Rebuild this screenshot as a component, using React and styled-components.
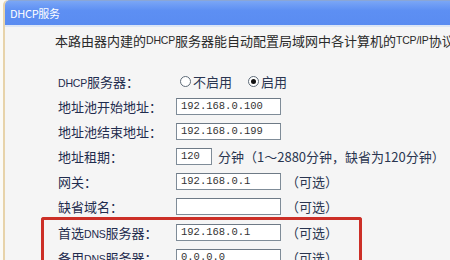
import React from 'react';
import styled, { createGlobalStyle } from 'styled-components';

const GlobalStyle = createGlobalStyle`
  html, body {
    margin: 0;
    padding: 0;
    background: #fbfaf6;
    overflow: hidden;
  }
  body {
    font-family: "Noto Sans CJK SC", "Liberation Sans", sans-serif;
  }
`;

const Window = styled.div`
  width: 450px;
  height: 260px;
  padding-left: 3px;
  box-sizing: border-box;
  overflow: hidden;
`;

const Panel = styled.div`
  height: 100%;
  background: #f5f5f5;
  border-left: 2px solid #e7d3aa;
  border-top-left-radius: 5px;
`;

const TitleBar = styled.div`
  height: 24px;
  display: flex;
  align-items: center;
  padding-left: 5px;
  background: linear-gradient(#7aa6f6, #5d8ff3 40%, #5a8cf1);
  border-top: 1px solid #8aa6d6;
  border-top-left-radius: 5px;
  color: #fff;
  font-size: 11px;
  letter-spacing: -0.3px;
`;

const TitleLine = styled.div`
  height: 2px;
  background: #dce6f5;
`;

const Intro = styled.p`
  margin: 0;
  height: 26px;
  padding-left: 50px;
  display: flex;
  align-items: center;
  font-size: 13px;
  color: #2a2a2a;
  white-space: nowrap;
`;

const Latin = styled.span`
  font-family: "Liberation Sans", sans-serif;
  font-size: 10.5px;
  letter-spacing: -0.2px;
`;

const Form = styled.div`
  margin-top: 16px;
`;

const Row = styled.div`
  display: grid;
  grid-template-columns: 118px auto;
  align-items: center;
  height: 25px;
  padding-left: ${p => p.indent}px;
`;

const Label = styled.span`
  font-size: 13px;
  color: #1f2c4e;
  white-space: nowrap;
`;

const Field = styled.div`
  display: flex;
  align-items: center;
  font-size: 13px;
  color: #2a3550;
  white-space: nowrap;
`;

const Input = styled.div`
  width: ${p => p.w}px;
  height: 17px;
  box-sizing: border-box;
  border: 1px solid #7f8c98;
  border-top-color: #6e7a86;
  background: #fff;
  padding-left: 4px;
  font-family: "Liberation Mono", monospace;
  font-size: 10.5px;
  line-height: 15px;
  color: #333;
`;

const Note = styled.span`
  margin-left: ${p => p.gap}px;
`;

const Radio = styled.span`
  width: 11px;
  height: 11px;
  box-sizing: border-box;
  border-radius: 50%;
  border: 1px solid #5e6b78;
  background: #fff;
  display: inline-flex;
  align-items: center;
  justify-content: center;
  margin: 0 2px 0 4px;

  &::after {
    content: '';
    width: 5px;
    height: 5px;
    border-radius: 50%;
    background: ${p => (p.checked ? '#111' : 'transparent')};
  }
`;

const RadioText = styled.span`
  margin-right: 12px;
`;

const DnsBox = styled.div`
  margin: -2px 0 0 36px;
  width: 321px;
  height: 60px;
  box-sizing: border-box;
  border: 3px solid #cc2f27;
  border-bottom: none;
  border-top-right-radius: 3px;
  border-top-left-radius: 3px;
`;

const TextRow = ({ label, value, width = 105, note, indent = 53 }) => (
  <Row indent={indent}>
    <Label>{label}</Label>
    <Field>
      <Input w={width}>{value}</Input>
      {note && <Note gap={5}>{note}</Note>}
    </Field>
  </Row>
);

export default function App() {
  return (
    <Window>
      <GlobalStyle />
      <Panel>
        <TitleBar>DHCP服务</TitleBar>
        <TitleLine />
        <Intro>
          本路由器内建的<Latin>DHCP</Latin>服务器能自动配置局域网中各计算机的<Latin>TCP/IP</Latin>协议
        </Intro>
        <Form>
          <Row indent={53}>
            <Label><Latin>DHCP</Latin>服务器：</Label>
            <Field>
              <Radio />
              <RadioText>不启用</RadioText>
              <Radio checked />
              <span>启用</span>
            </Field>
          </Row>
          <TextRow label="地址池开始地址：" value="192.168.0.100" />
          <TextRow label="地址池结束地址：" value="192.168.0.199" />
          <Row indent={53}>
            <Label>地址租期：</Label>
            <Field>
              <Input w={36}>120</Input>
              <Note gap={6}>分钟（1～2880分钟，缺省为120分钟）</Note>
            </Field>
          </Row>
          <TextRow label="网关：" value="192.168.0.1" note="（可选）" />
          <TextRow label="缺省域名：" value="" note="（可选）" />
          <DnsBox>
            <TextRow
              label={<>首选<Latin>DNS</Latin>服务器：</>}
              value="192.168.0.1"
              note="（可选）"
              indent={14}
            />
            <TextRow
              label={<>备用<Latin>DNS</Latin>服务器：</>}
              value="0.0.0.0"
              note="（可选）"
              indent={14}
            />
          </DnsBox>
        </Form>
      </Panel>
    </Window>
  );
}
